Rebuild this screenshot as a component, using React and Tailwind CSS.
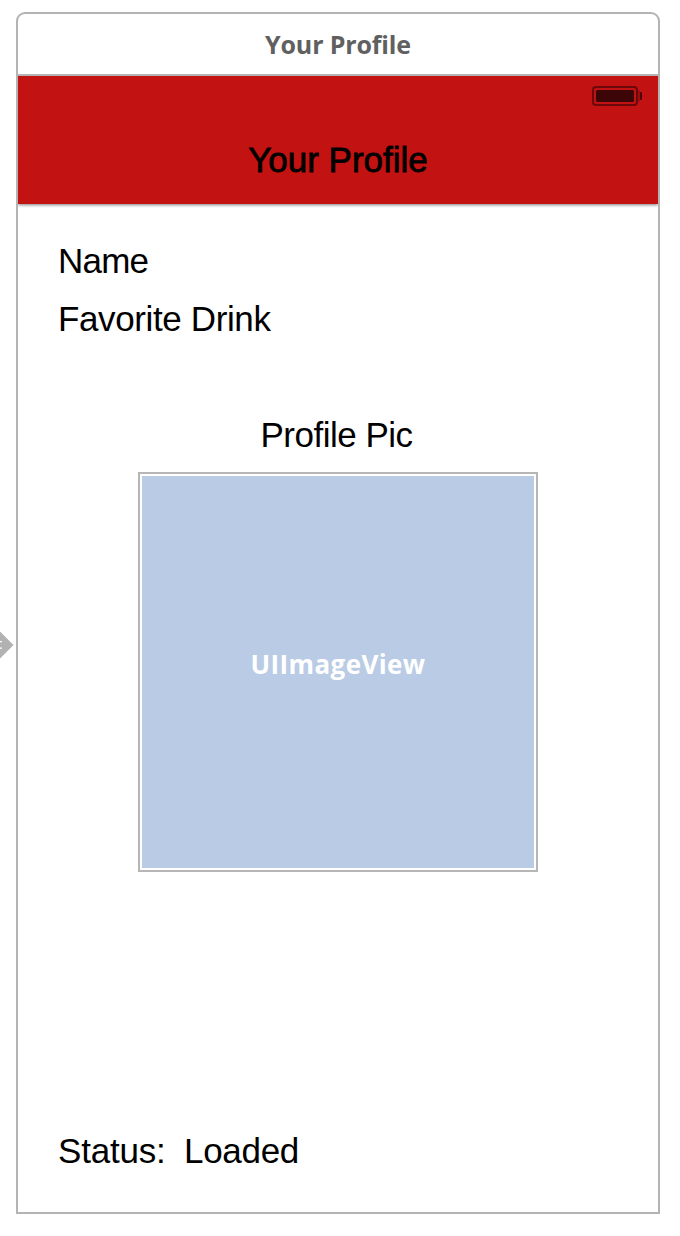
function Battery() {
  return (
    <svg className="block h-5 w-[50px]" viewBox="0 0 50 20" fill="none">
      <rect x="1" y="1" width="44" height="18" rx="3" stroke="#6c080b" strokeWidth="2" />
      <rect x="4" y="4" width="38" height="12" rx="1.5" fill="#3c0508" />
      <path d="M47 4.5V15.5" stroke="#a00d10" strokeWidth="2" />
      <path d="M48 6h1.2l.8 1v6l-.8 1H48z" fill="#4c0609" />
    </svg>
  );
}

function Label({ children, className = "" }) {
  return (
    <div className={`h-10 whitespace-pre text-[35px] leading-10 text-black ${className}`}>
      {children}
    </div>
  );
}

export default function App() {
  return (
    <div className="relative h-[1236px] w-[680px] overflow-hidden bg-white pl-4 pt-3 font-['Liberation_Sans',sans-serif]">
      <svg className="absolute left-0 top-[630px] h-[30px] w-[15px]" viewBox="0 0 15 30">
        <path d="M0 1.5L13.5 15L0 28.5V18.8H2V17.6H0V12.3H2V11.1H0Z" fill="#b2b2b2" />
      </svg>

      <div className="flex h-[1202px] w-[644px] flex-col rounded-t-[9px] border-2 border-[#b4b4b4] bg-white">
        <div className="flex h-[62px] shrink-0 items-center justify-center border-b-2 border-[#b4b4b4] pt-0.5 font-['Open_Sans',sans-serif] text-[25px] font-bold text-[#606060]">
          <span className="tracking-[-0.15px]">Your Profile</span>
        </div>

        <div className="flex h-32 shrink-0 flex-col bg-[#c21212] shadow-[0_1px_3px_rgba(0,0,0,0.5)] [clip-path:inset(0_0_-6px_0)]">
          <div className="flex h-16 justify-end pr-4 pt-2.5">
            <Battery />
          </div>
          <Label className="text-center tracking-[0px] [-webkit-text-stroke:0.8px_#000]">Your Profile</Label>
        </div>

        <div className="flex flex-1 flex-col px-10 pt-[37px]">
          <Label className="tracking-[-0.8px]">Name</Label>
          <Label className="mt-[18px] tracking-[-0.38px]">Favorite Drink</Label>
          <Label className="mt-[76px] pr-[3px] text-center tracking-[-0.5px]">Profile Pic</Label>
          <div className="mt-[17px] size-[400px] self-center border-2 border-[#b6b6b6] p-0.5">
            <div className="flex size-full items-center justify-center bg-[#b9cbe5] pb-4 font-['Open_Sans',sans-serif] text-[26px] font-bold text-white">
              <span className="tracking-[0.4px]">UIImageView</span>
            </div>
          </div>
          <div className="mt-[259px] flex">
            <Label className="w-[126px] tracking-[-0.2px]">Status:</Label>
            <Label className="tracking-[-0.3px]">Loaded</Label>
          </div>
        </div>
      </div>
    </div>
  );
}
